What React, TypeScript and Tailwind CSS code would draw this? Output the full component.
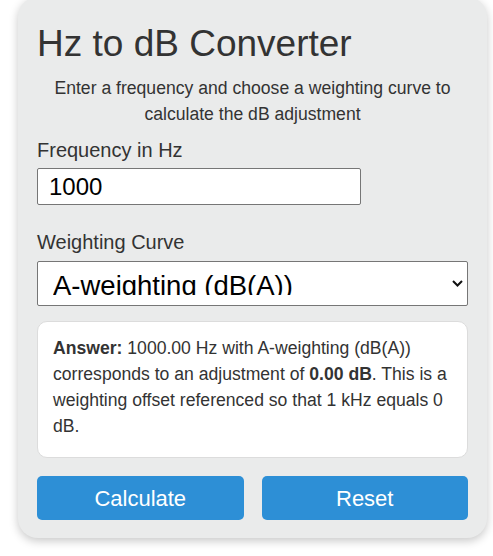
import React from "react";

export default function App() {
  return (
    <div className="min-h-[556px] bg-white" style={{ fontFamily: '"Liberation Sans", Arial, sans-serif' }}>
      <div className="ml-[18px] mt-[-3px] w-[469px] rounded-[20px] bg-[#eaebeb] px-[19px] pt-[27px] pb-[18px] text-[#333] shadow-[0_3px_10px_rgba(0,0,0,0.22)]">
        <h1 className="text-[37px] leading-[40px] font-normal">Hz to dB Converter</h1>
        <p className="mt-[11px] text-center text-[17.6px] leading-[26px]">
          Enter a frequency and choose a weighting curve to calculate the dB adjustment
        </p>
        <div className="mt-[11px] text-[20px] leading-[24px]">Frequency in Hz</div>
        <div className="mt-[6px] flex h-[37px] w-[324px] items-center rounded-[2px] border border-[#767676] bg-white pl-[11px] text-[24px] text-black">
          1000
        </div>
        <div className="mt-[25px] text-[20px] leading-[24px]">Weighting Curve</div>
        <div className="relative mt-[7px] flex h-[45px] w-full items-start rounded-[2px] border border-[#767676] bg-white pl-[15px] text-black">
          <div className="mt-[8px] h-[25px] overflow-hidden text-[27.5px] leading-[31px] whitespace-nowrap">
            A-weighting (dB(A))
          </div>
          <svg className="absolute right-[4px] top-[18px]" width="11" height="7" viewBox="0 0 11 7">
            <path d="M1 1 L5.5 5.5 L10 1" fill="none" stroke="#111" strokeWidth="2" />
          </svg>
        </div>
        <div className="mt-[15px] rounded-[10px] border border-[#dcdcdc] bg-white pt-[13px] pb-[18px] pl-[15px] pr-[12px] text-[17.6px] leading-[26px]">
          <b>Answer:</b> 1000.00 Hz with A-weighting (dB(A)) corresponds to an adjustment of <b>0.00 dB</b>. This is a weighting offset referenced so that 1 kHz equals 0 dB.
        </div>
        <div className="mt-[18px] grid grid-cols-2 gap-[18px]">
          <button className="h-[44px] rounded-[5px] bg-[#2d8fd6] text-[22px] text-white">Calculate</button>
          <button className="h-[44px] rounded-[5px] bg-[#2d8fd6] text-[22px] text-white">Reset</button>
        </div>
      </div>
    </div>
  );
}
